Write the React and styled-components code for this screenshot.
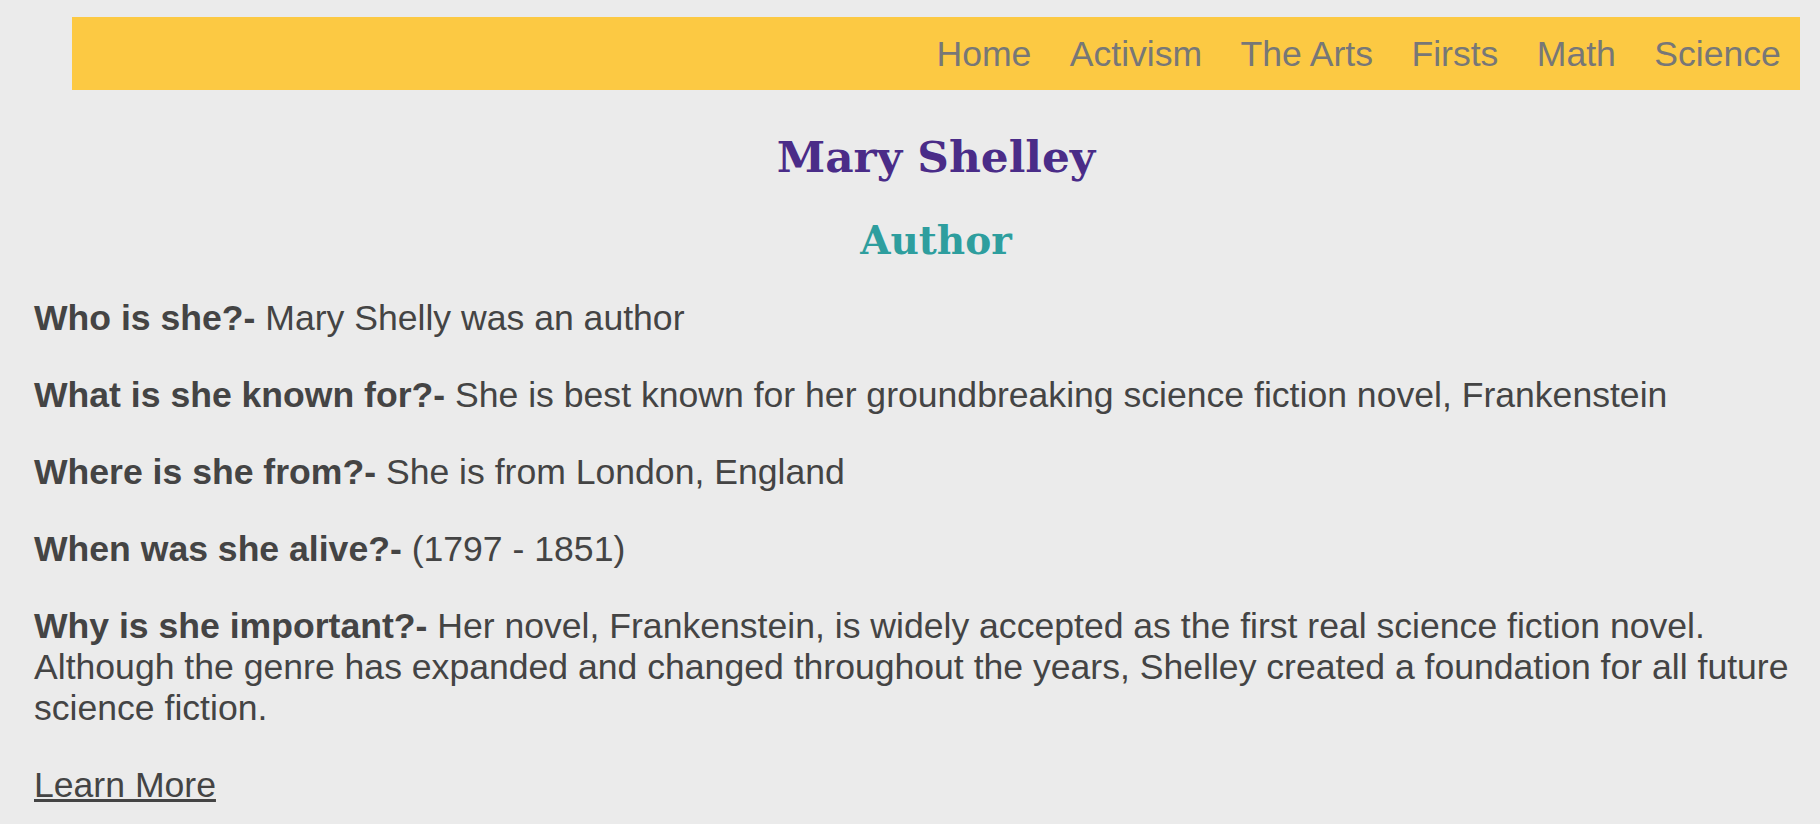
import styled, {createGlobalStyle} from "styled-components";

const GlobalStyle = createGlobalStyle`
    html, body {
        margin: 0;
        padding: 0;
        background-color: #ebebeb;
    }
    body {
        font-family: "Liberation Sans", Arial, sans-serif;
        font-size: 35.6px;
        color: #444444;
    }
`

const links = ["Home", "Activism", "The Arts", "Firsts", "Math", "Science"];

const facts = [
    {q: "Who is she?-", a: "Mary Shelly was an author"},
    {q: "What is she known for?-", a: "She is best known for her groundbreaking science fiction novel, Frankenstein"},
    {q: "Where is she from?-", a: "She is from London, England"},
    {q: "When was she alive?-", a: "(1797 - 1851)"},
    {
        q: "Why is she important?-",
        a: "Her novel, Frankenstein, is widely accepted as the first real science fiction novel. Although the genre has expanded and changed throughout the years, Shelley created a foundation for all future science fiction."
    },
];

function App() {
    return (
        <>
            <GlobalStyle/>
            <Page>
                <NavBar>
                    {links.map(link => (
                        <NavLink key={link} href="#">{link}</NavLink>
                    ))}
                </NavBar>
                <Header>
                    <Name>Mary Shelley</Name>
                    <Role>Author</Role>
                </Header>
                <Content>
                    {facts.map(f => (
                        <Fact key={f.q}>
                            <Question>{f.q}</Question> {f.a}
                        </Fact>
                    ))}
                    <Fact>
                        <MoreLink href="#">Learn More</MoreLink>
                    </Fact>
                </Content>
            </Page>
        </>
    )
}

export default App;

const Page = styled.div`
    padding: 17px 20px 0 0;
`

const NavBar = styled.nav`
    display: flex;
    justify-content: flex-end;
    align-items: center;
    height: 73px;
    margin-left: 72px;
    background-color: #fcc943;
`

const NavLink = styled.a`
    padding: 0 19.2px;
    color: #777777;
    text-decoration: none;
    font-size: 35.6px;
    line-height: 1;
    margin-top: 2px;
`

const Header = styled.header`
    margin-left: 72px;
    padding-top: 41px;
    text-align: center;
    font-family: "DejaVu Serif", Georgia, serif;
    font-weight: bold;
`

const Name = styled.h1`
    margin: 0;
    font-size: 43.8px;
    color: #4a2c88;
`

const Role = styled.h2`
    margin: 34.5px 0 0 0;
    font-size: 39px;
    color: #2e9e9e;
`

const Content = styled.main`
    padding-left: 34px;
`

const Fact = styled.p`
    margin: 35.8px 0;
    line-height: 1.155;
`

const Question = styled.b`
    font-weight: bold;
`

const MoreLink = styled.a`
    color: #444444;
    text-decoration: underline;
`
